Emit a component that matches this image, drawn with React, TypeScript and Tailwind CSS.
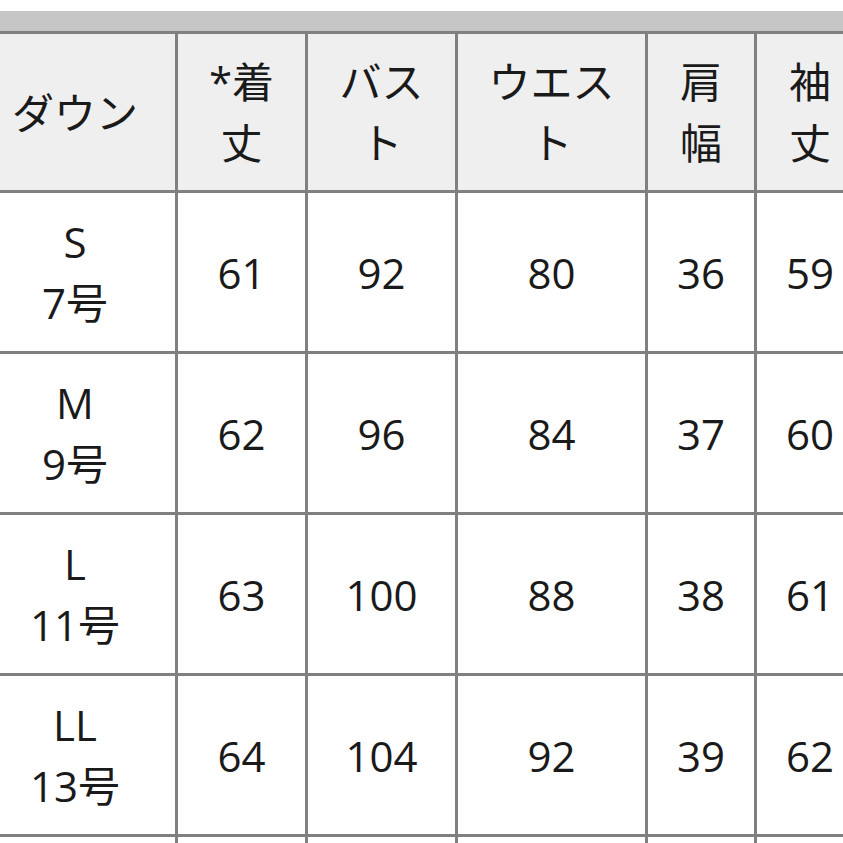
const header = [
  ["ダウン"],
  ["*着", "丈"],
  ["バス", "ト"],
  ["ウエス", "ト"],
  ["肩", "幅"],
  ["袖", "丈"],
];

const rows = [
  [["S", "7号"], "61", "92", "80", "36", "59"],
  [["M", "9号"], "62", "96", "84", "37", "60"],
  [["L", "11号"], "63", "100", "88", "38", "61"],
  [["LL", "13号"], "64", "104", "92", "39", "62"],
];

function Cell({ lines, head }: { lines: string[]; head?: boolean }) {
  return (
    <div
      className={`flex flex-col items-center justify-center text-center ${
        head ? "h-[156px] bg-[#efefef]" : "h-[158px] bg-white"
      }`}
    >
      {lines.map((l, i) => (
        <span key={i} className="block">
          {l}
        </span>
      ))}
    </div>
  );
}

export default function App() {
  return (
    <div
      className="h-[843px] w-[843px] overflow-hidden bg-white text-[42px] leading-[61px] font-normal text-[#1a1a1a]"
      style={{ fontFamily: '"Open Sans", "Noto Sans CJK JP", sans-serif' }}
    >
      <div className="mt-[11px] h-[20px] bg-[#c6c6c6]" />
      <div className="-ml-[28px] grid w-max grid-cols-[200px_127px_147px_187px_106px_106px] gap-[3px] bg-[#808080] p-[3px]">
        {header.map((h, i) => (
          <Cell key={`h${i}`} lines={h} head />
        ))}
        {rows.map((r, ri) =>
          r.map((c, ci) => (
            <Cell key={`${ri}-${ci}`} lines={Array.isArray(c) ? c : [c]} />
          ))
        )}
        {header.map((_, i) => (
          <Cell key={`e${i}`} lines={[]} />
        ))}
      </div>
    </div>
  );
}
